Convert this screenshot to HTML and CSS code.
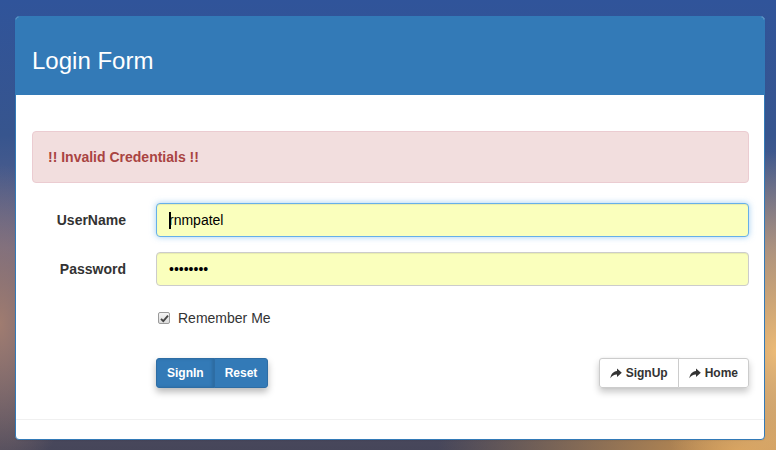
FILE: index.html
```html
<!DOCTYPE html>
<html lang="en">
<head>
<meta charset="utf-8">
<title>Login Form</title>
<link rel="stylesheet" href="styles.css">
</head>
<body>
<div class="panel">
  <div class="panel-heading">
    <h3 class="panel-title">Login Form</h3>
  </div>
  <div class="panel-body">
    <div class="alert">!! Invalid Credentials !!</div>
    <form class="form">
      <div class="row row-user">
        <label class="label" for="user">UserName</label>
        <div class="field">
          <input id="user" class="input focused" type="text" value="rnmpatel">
          <span class="caret"></span>
        </div>
      </div>
      <div class="row row-pass">
        <label class="label" for="pass">Password</label>
        <div class="field">
          <input id="pass" class="input" type="password" value="12345678">
        </div>
      </div>
      <div class="row row-check">
        <span></span>
        <label class="check">
          <span class="box"><svg width="9" height="9" viewBox="0 0 9 9"><path d="M1 4.8 L3.3 7.2 L8 1.6" fill="none" stroke="#444" stroke-width="1.8"/></svg></span>
          <span>Remember Me</span>
        </label>
      </div>
      <div class="row row-buttons">
        <span></span>
        <div class="actions">
          <div class="btn-group primary">
            <button type="button" class="btn btn-primary">SignIn</button>
            <button type="button" class="btn btn-primary">Reset</button>
          </div>
          <div class="btn-group default">
            <button type="button" class="btn btn-default"><svg class="icon" width="12" height="11" viewBox="0 0 12 11"><path d="M7 0.5 L11.8 4.8 L7 9 V6.6 C4.2 6.5 2.2 7.6 0.4 10.3 C0.9 6.4 3.2 3.5 7 3.1 Z" fill="#333"/></svg>SignUp</button>
            <button type="button" class="btn btn-default"><svg class="icon" width="12" height="11" viewBox="0 0 12 11"><path d="M7 0.5 L11.8 4.8 L7 9 V6.6 C4.2 6.5 2.2 7.6 0.4 10.3 C0.9 6.4 3.2 3.5 7 3.1 Z" fill="#333"/></svg>Home</button>
          </div>
        </div>
      </div>
    </form>
  </div>
  <div class="panel-footer"></div>
</div>
</body>
</html>
```
FILE: styles.css
```css
html, body {
  margin: 0;
  padding: 0;
}
body {
  min-height: 450px;
  font-family: "Liberation Sans", Arial, Helvetica, sans-serif;
  font-size: 14px;
  line-height: 20px;
  color: #333;
  background:
    radial-gradient(ellipse 120px 200px at 100% 78%, rgba(236, 186, 118, 1) 0%, rgba(236, 186, 118, 0.6) 45%, rgba(236, 186, 118, 0) 100%),
    radial-gradient(ellipse 300px 80px at 95% 100%, rgba(200, 146, 80, 1) 0%, rgba(200, 146, 80, 0) 100%),
    radial-gradient(ellipse 80px 160px at 0% 72%, rgba(160, 124, 112, 1) 0%, rgba(160, 124, 112, 0) 100%),
    linear-gradient(180deg, #30549a 0%, #37558e 30%, #64658a 55%, #56546a 80%, #46465a 100%);
  overflow: hidden;
}
.panel {
  margin: 16px 11px 0 15px;
  background: #fff;
  border: 1px solid #337ab7;
  border-radius: 4px;
  box-shadow: 0 1px 1px rgba(0, 0, 0, 0.05);
}
.panel-heading {
  background: #337ab7;
  color: #fff;
  padding: 31px 16px 21px;
  border-radius: 3px 3px 0 0;
}
.panel-title {
  margin: 0;
  font-size: 24px;
  line-height: 26px;
  font-weight: normal;
}
.panel-body {
  padding: 36px 15px 31px 16px;
}
.alert {
  background: #f2dede;
  border: 1px solid #ebccd1;
  color: #a94442;
  border-radius: 4px;
  padding: 15px;
  font-weight: bold;
  margin-bottom: 20px;
}
.form {
  display: flex;
  flex-direction: column;
}
.row {
  display: grid;
  grid-template-columns: 94px 1fr;
  column-gap: 30px;
  align-items: center;
}
.row-user { margin-bottom: 15px; }
.row-pass { margin-bottom: 15px; }
.row-check { margin-bottom: 30px; height: 27px; align-items: start; }
.label {
  text-align: right;
  font-weight: bold;
}
.field {
  position: relative;
}
.input {
  display: block;
  box-sizing: border-box;
  width: 100%;
  height: 34px;
  padding: 6px 12px;
  font-family: "Liberation Sans", Arial, sans-serif;
  font-size: 14px;
  color: #000;
  background: #faffbd;
  border: 1px solid #ccc;
  border-radius: 4px;
  box-shadow: inset 0 1px 1px rgba(0, 0, 0, 0.075);
  outline: none;
}
.input.focused {
  border-color: #66afe9;
  box-shadow: inset 0 1px 1px rgba(0, 0, 0, 0.075), 0 0 6px rgba(102, 175, 233, 0.6);
}
.caret {
  position: absolute;
  left: 13px;
  top: 9px;
  width: 2px;
  height: 17px;
  background: #000;
}
.check {
  display: flex;
  align-items: center;
  padding-top: 7px;
  padding-left: 2px;
  color: #333;
}
.box {
  box-sizing: border-box;
  width: 12px;
  height: 12px;
  border: 1px solid #9a9a9a;
  border-radius: 2px;
  background: linear-gradient(#f4f4f4, #dcdcdc);
  display: flex;
  align-items: center;
  justify-content: center;
  margin-right: 8px;
}
.actions {
  display: flex;
  justify-content: space-between;
}
.btn-group {
  display: flex;
  border-radius: 3px;
}
.btn-group.primary {
  box-shadow: 0 4px 7px rgba(0, 0, 0, 0.28);
}
.btn-group.default {
  box-shadow: 0 4px 7px rgba(0, 0, 0, 0.22);
}
.btn {
  font-family: "Liberation Sans", Arial, sans-serif;
  font-size: 12px;
  line-height: 18px;
  font-weight: bold;
  padding: 5px 10px;
  border: 1px solid transparent;
  margin: 0;
  display: flex;
  align-items: center;
}
.btn:first-child {
  border-radius: 3px 0 0 3px;
}
.btn:last-child {
  border-radius: 0 3px 3px 0;
  margin-left: -1px;
}
.btn-primary {
  background: #337ab7;
  border-color: #2e6da4;
  color: #fff;
}
.btn-primary:first-child {
  box-shadow: inset -2px 0 3px rgba(0, 0, 0, 0.12);
}
.btn-default {
  background: #fff;
  border-color: #ccc;
  color: #333;
}
.btn-default:first-child {
  box-shadow: 1px 0 2px rgba(0, 0, 0, 0.1);
}
.icon {
  margin-right: 4px;
}
.panel-footer {
  height: 19px;
  border-top: 1px solid #f0f0f0;
  border-radius: 0 0 3px 3px;
}
```
